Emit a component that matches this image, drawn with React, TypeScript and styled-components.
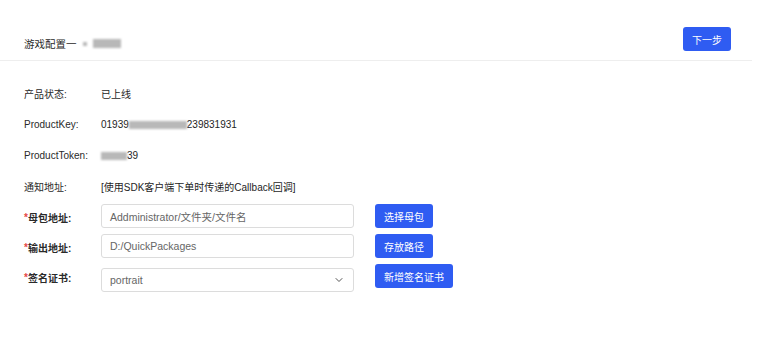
import React from "react";
import styled, { createGlobalStyle } from "styled-components";
import { ChevronDown } from "lucide-react";

const GlobalStyle = createGlobalStyle`
  body {
    margin: 0;
    background: #ffffff;
    font-family: "Liberation Sans", "Noto Sans CJK SC", sans-serif;
    color: #222;
  }
`;

const blue = "#2f5cf2";

const Page = styled.div`
  width: 759px;
  height: 351px;
  overflow: hidden;
  background: #fff;
`;

const Header = styled.div`
  width: 752px;
  box-sizing: border-box;
  height: 61px;
  padding: 27px 21px 0 24px;
  display: flex;
  justify-content: space-between;
  align-items: flex-start;
  border-bottom: 1px solid #eeeeee;
`;

const Title = styled.div`
  font-size: 10.5px;
  color: #2a2a2a;
  margin-top: 9px;
  display: flex;
  align-items: center;
  gap: 6px;
`;

const Blur = styled.span<{ $w: number; $h?: number }>`
  display: inline-block;
  width: ${(p) => p.$w}px;
  height: ${(p) => p.$h ?? 8}px;
  background: #b8b8b8;
  filter: blur(1.2px);
  vertical-align: middle;
`;

const Button = styled.button`
  height: 24px;
  padding: 0 9px;
  border: none;
  border-radius: 3px;
  background: ${blue};
  color: #fff;
  font-family: "Noto Sans CJK SC", sans-serif;
  font-size: 10px;
  cursor: pointer;
  white-space: nowrap;
`;

const Body = styled.div`
  padding: 17px 0 0 24px;
`;

const InfoRow = styled.div`
  height: 31px;
  display: flex;
  align-items: center;
  font-size: 10px;
`;

const Label = styled.div<{ $bold?: boolean }>`
  width: 77px;
  flex: 0 0 77px;
  color: #2a2a2a;
  font-weight: ${(p) => (p.$bold ? 600 : 400)};
`;

const Value = styled.div`
  color: #1e1e1e;
  display: flex;
  align-items: center;
`;

const Star = styled.span`
  color: #e54545;
`;

const Form = styled.div`
  margin-top: 2px;
  display: flex;
  flex-direction: column;
  gap: 6px;
`;

const FormRow = styled.div`
  display: flex;
  align-items: flex-start;
  font-size: 10px;
`;

const FieldLabel = styled(Label)`
  height: 24px;
  box-sizing: border-box;
  padding-top: 2px;
  display: flex;
  align-items: center;
`;

const Input = styled.div<{ $offset?: number }>`
  width: 253px;
  height: 24px;
  margin-top: ${(p) => p.$offset ?? 0}px;
  box-sizing: border-box;
  border: 1px solid #dcdcdc;
  border-radius: 3px;
  padding: 0 8px;
  display: flex;
  align-items: center;
  justify-content: space-between;
  font-size: 10.5px;
  color: #666;
  margin-right: 21px;
`;

const infoRows = [
  { label: "产品状态:", value: <>已上线</> },
  {
    label: "ProductKey:",
    value: (
      <>
        01939
        <Blur $w={58} />
        239831931
      </>
    ),
  },
  {
    label: "ProductToken:",
    value: (
      <>
        <Blur $w={26} />
        39
      </>
    ),
  },
  { label: "通知地址:", value: <>[使用SDK客户端下单时传递的Callback回调]</> },
];

export default function App() {
  return (
    <Page>
      <GlobalStyle />
      <Header>
        <Title>
          游戏配置一
          <Blur $w={4} $h={4} />
          <Blur $w={28} $h={9} />
        </Title>
        <Button>下一步</Button>
      </Header>
      <Body>
        {infoRows.map((r) => (
          <InfoRow key={r.label}>
            <Label>{r.label}</Label>
            <Value>{r.value}</Value>
          </InfoRow>
        ))}
        <Form>
          <FormRow>
            <FieldLabel $bold>
              <Star>*</Star>母包地址:
            </FieldLabel>
            <Input>Addministrator/文件夹/文件名</Input>
            <Button>选择母包</Button>
          </FormRow>
          <FormRow>
            <FieldLabel $bold>
              <Star>*</Star>输出地址:
            </FieldLabel>
            <Input>D:/QuickPackages</Input>
            <Button>存放路径</Button>
          </FormRow>
          <FormRow>
            <FieldLabel $bold>
              <Star>*</Star>签名证书:
            </FieldLabel>
            <Input $offset={4}>
              portrait
              <ChevronDown size={12} strokeWidth={2} color="#555" />
            </Input>
            <Button>新增签名证书</Button>
          </FormRow>
        </Form>
      </Body>
    </Page>
  );
}
